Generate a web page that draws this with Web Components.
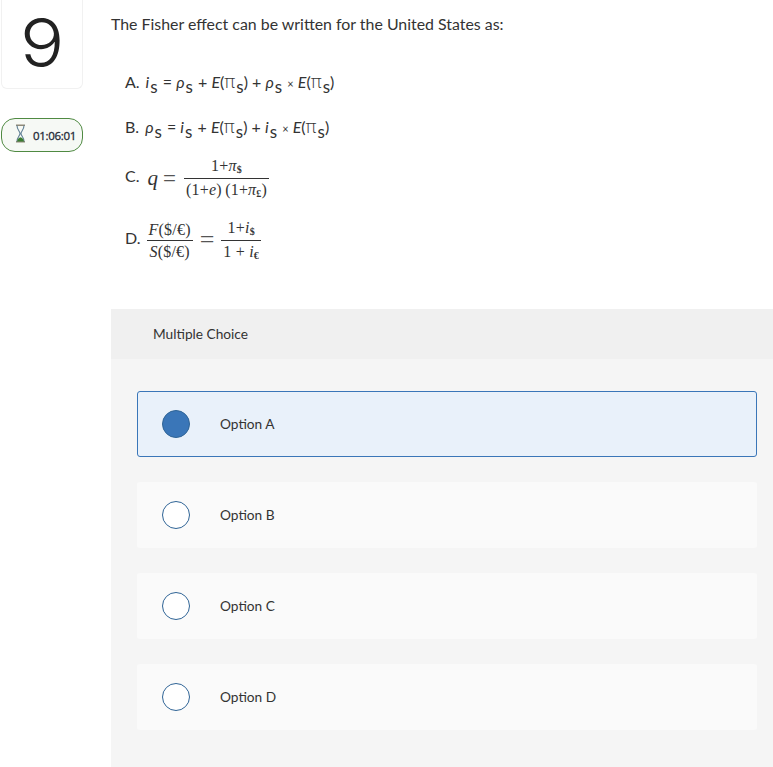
<!DOCTYPE html>
<html lang="en"><head><meta charset="utf-8"><title>Question 9</title>
<style>
html,body{margin:0;padding:0;background:#fff}
body{font-family:"Lato","Liberation Sans",sans-serif;color:#333;width:773px;height:767px;overflow:hidden}
</style></head><body>
<quiz-page>
  <question-rail slot="rail" number="9" time="01:06:01"></question-rail>
  <question-body slot="body">
    <span slot="prompt">The Fisher effect can be written for the United States as:</span>
    <answer-line style="height:45px" label="A."><i>i</i><sub-s></sub-s> = <i>ρ</i><sub-s></sub-s> + <i>E</i><par-pi></par-pi> + <i>ρ</i><sub-s></sub-s> <small>×</small> <i>E</i><par-pi></par-pi></answer-line>
    <answer-line style="height:44px" label="B."><i>ρ</i><sub-s></sub-s> = <i>i</i><sub-s></sub-s> + <i>E</i><par-pi></par-pi> + <i>i</i><sub-s></sub-s> <small>×</small> <i>E</i><par-pi></par-pi></answer-line>
    <answer-line style="height:60px" label="C." raised><math-c></math-c></answer-line>
    <answer-line style="height:64px" label="D." raised><math-d></math-d></answer-line>
  </question-body>
  <mc-panel slot="body" title="Multiple Choice">
    <mc-option selected>Option A</mc-option>
    <mc-option>Option B</mc-option>
    <mc-option>Option C</mc-option>
    <mc-option>Option D</mc-option>
  </mc-panel>
</quiz-page>
<script>
function def(name, html, init){
  customElements.define(name, class extends HTMLElement{
    constructor(){super();this.attachShadow({mode:'open'}).innerHTML=html;}
    connectedCallback(){if(init)init(this,this.shadowRoot);}
  });
}
def('quiz-page',`<style>:host{display:grid;grid-template-columns:111px 662px;width:773px;height:767px}
.b{display:flex;flex-direction:column}</style><div><slot name="rail"></slot></div><div class="b"><slot name="body"></slot></div>`);
def('question-rail',`<style>:host{display:flex;flex-direction:column;padding-left:1px;box-sizing:border-box;width:111px}
.n{width:82px;height:89px;box-sizing:border-box;border:1px solid #f1f1f1;border-top:0;border-radius:0 0 6px 6px;display:flex;align-items:center;justify-content:center;font:300 67px/1 "Inter",sans-serif;color:#222;padding-bottom:4px}
.n span{display:block;transform:scaleX(1.1)}
.t{margin-top:29px;width:82px;height:34px;box-sizing:border-box;border:1px solid #4f8a42;border-radius:14px;background:#f6f9f5;display:flex;align-items:center;gap:7px;padding-left:13px;font:400 11.500px/1 "Open Sans",sans-serif;-webkit-text-stroke:.3px #1f2a36;color:#1f2a36;letter-spacing:-.3px}
#tm{margin-top:2px}
svg{display:block;margin-top:-3px}</style>
<div class="n"><span id="nm"></span></div><div class="t"><svg width="11" height="19" viewBox="0 0 11 19"><path d="M1 1.200h9M1 17.800h9" stroke="#8f8a78" stroke-width="1.400" fill="none"/><path d="M2 1.500c0 4.500 3 5.500 3 8s-3 3.500-3 8M9 1.500c0 4.500-3 5.500-3 8s3 3.500 3 8" stroke="#5f7f95" stroke-width="1.100" fill="none"/><path d="M2 17.500c.5-3 2-3.800 3.500-4.300 1.500.5 3 1.300 3.500 4.300z" fill="#3c7d32"/></svg><span id="tm"></span></div>`,
(h,s)=>{s.querySelector('#nm').textContent=h.getAttribute('number');s.querySelector('#tm').textContent=h.getAttribute('time');});
def('question-body',`<style>:host{display:block;height:309px;box-sizing:border-box;padding-top:14px;color:#333}
.p{font-size:15.900px;line-height:19px;height:19px;white-space:nowrap;margin-bottom:26px}
.l{padding-left:14px;display:flex;flex-direction:column}</style>
<div class="p"><slot name="prompt"></slot></div><div class="l"><slot></slot></div>`);
def('answer-line',`<style>:host{display:flex;align-items:center;font-size:16px;white-space:pre;color:#333}
.lab{margin-right:6px}:host([raised]) .lab{padding-bottom:5px}
::slotted(small){font-size:11px}::slotted(i){font-style:italic}
.c{display:block}</style>
<span class="lab"></span><span class="c"><slot></slot></span>`,(h,s)=>{s.querySelector('.lab').textContent=h.getAttribute('label');});
def('sub-s',`<style>:host{display:inline-block;font-size:17px;line-height:1;transform:translateY(5px);margin:0 1px 0 1px}</style>s`);
def('par-pi',`<style>:host{display:inline-block}
.p{font:300 18px/1 "Open Sans",sans-serif;display:inline-block}
.s{display:inline-block;font-size:17px;line-height:1;transform:translateY(5px);margin:0 0 0 1px}</style>(<span class="p">π</span><span class="s">s</span>)`);
const mstyle=`<style>:host{display:inline-flex;align-items:center;font-family:"Liberation Serif",serif;color:#333;vertical-align:middle}
.frac{display:inline-flex;flex-direction:column;align-items:center;font-size:16px;line-height:21px;letter-spacing:.2px}
.top{padding:0 2px;border-bottom:1px solid #333;align-self:stretch;text-align:center}
.bot{padding:0 2px;text-align:center}
i.sub{font-size:10px;font-weight:700;font-style:normal;position:relative;top:2px}
.eq{font-size:26px;margin:0 7px;line-height:1;color:#555}
.q{font-size:21px;font-style:italic;margin-left:2px}</style>`;
def('math-c',mstyle+`<span class="q">q</span><span class="eq" style="margin:0 8px 0 5px;font-size:23px">=</span><span class="frac"><span class="top">1+<em>π</em><i class="sub">$</i></span><span class="bot">(1+<em>e</em>)&#8201;(1+<em>π</em><i class="sub">£</i>)</span></span>`);
def('math-d',mstyle+`<span class="frac"><span class="top"><em>F</em>($/€)</span><span class="bot"><em>S</em>($/€)</span></span><span class="eq">=</span><span class="frac"><span class="top">1+<em>i</em><i class="sub">$</i></span><span class="bot">1 + <em>i</em><i class="sub">€</i></span></span>`);
def('mc-panel',`<style>:host{display:block;height:458px;background:#f5f5f5}
.h{height:50px;background:#f0f0f0;box-sizing:border-box;padding:0 0 1px 42px;display:flex;align-items:center;font-size:13.700px;color:#333}
.o{padding:32px 16px 0 26px;display:flex;flex-direction:column;gap:25px}</style>
<div class="h"></div><div class="o"><slot></slot></div>`,(h,s)=>{s.querySelector('.h').textContent=h.getAttribute('title');});
def('mc-option',`<style>:host{display:flex;align-items:center;height:66px;box-sizing:border-box;background:#fafafa;border-radius:3px;padding-left:25px;gap:30px;font-size:13.700px;color:#333}
:host([selected]){background:#e9f1fa;border:1px solid #3a76b8;padding-left:24px}
.r{width:28px;height:28px;box-sizing:border-box;border-radius:50%;border:1px solid #2f6496;background:#fff;flex:none}
.x{padding-bottom:2px}
:host([selected]) .r{background:#3a76b8}</style><span class="r"></span><span class="x"><slot></slot></span>`);
</script>
</body></html>
